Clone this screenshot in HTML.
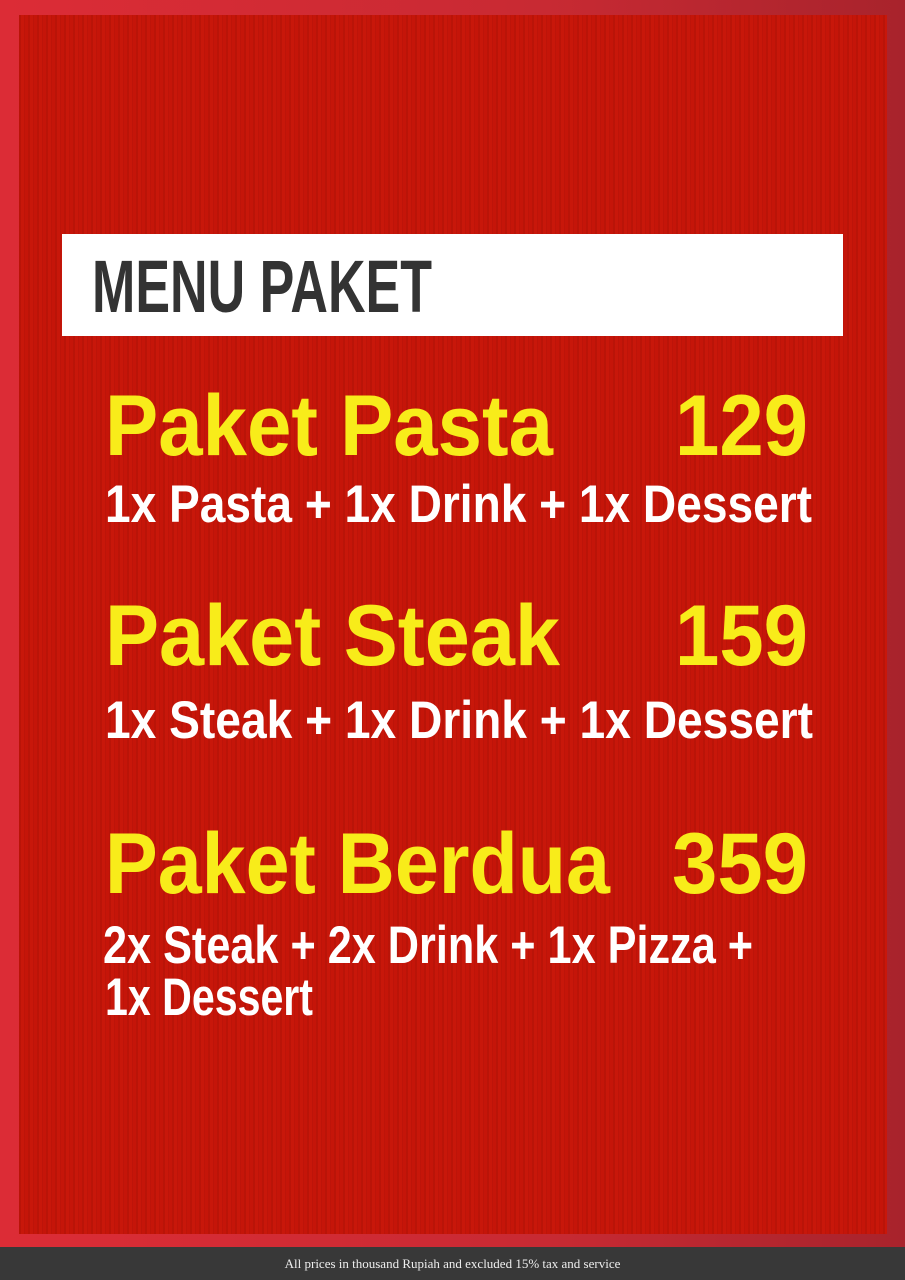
<!DOCTYPE html>
<html><head><meta charset="utf-8"><style>
html,body{margin:0;padding:0}
body{width:905px;height:1280px;position:relative;overflow:hidden;background:linear-gradient(90deg,#dc2c36,#c82a33 60%,#a8232c);font-family:"Liberation Sans",sans-serif}
.inner{position:absolute;left:19px;top:15px;width:868px;height:1219px;background:#c51509;
background-image:repeating-linear-gradient(90deg,rgba(0,0,0,.06) 0 2px,rgba(255,60,30,.05) 2px 5px,rgba(0,0,0,.04) 5px 6px,transparent 6px 9px);}
.foot{position:absolute;left:0;top:1247px;width:905px;height:33px;background:#383838;color:#eee;font-family:"Liberation Serif",serif;font-size:13px;text-align:center;line-height:33px}
svg{position:absolute;left:0;top:0}
</style></head><body>
<div class="inner"></div>
<svg width="905" height="1280" font-family="Liberation Sans, sans-serif" font-weight="bold">
<rect x="62" y="234" width="781" height="102" fill="#fff"/>
<text x="92" y="312" font-size="74" fill="#333" textLength="340" lengthAdjust="spacingAndGlyphs">MENU PAKET</text>
<g fill="#f8ec1a" font-size="86">
<text x="105" y="455" textLength="448" lengthAdjust="spacingAndGlyphs">Paket Pasta</text>
<text x="675" y="455" textLength="133" lengthAdjust="spacingAndGlyphs">129</text>
<text x="105" y="665" textLength="455" lengthAdjust="spacingAndGlyphs">Paket Steak</text>
<text x="675" y="665" textLength="133" lengthAdjust="spacingAndGlyphs">159</text>
<text x="105" y="893" textLength="505" lengthAdjust="spacingAndGlyphs">Paket Berdua</text>
<text x="672" y="893" textLength="136" lengthAdjust="spacingAndGlyphs">359</text>
</g>
<g fill="#fff" font-size="53">
<text x="105" y="522" textLength="707" lengthAdjust="spacingAndGlyphs">1x Pasta + 1x Drink + 1x Dessert</text>
<text x="105" y="738" textLength="708" lengthAdjust="spacingAndGlyphs">1x Steak + 1x Drink + 1x Dessert</text>
<text x="103" y="963" textLength="650" lengthAdjust="spacingAndGlyphs">2x Steak + 2x Drink + 1x Pizza +</text>
<text x="105" y="1015" textLength="208" lengthAdjust="spacingAndGlyphs">1x Dessert</text>
</g>
</svg>
<div class="foot">All prices in thousand Rupiah and excluded 15% tax and service</div>
</body></html>
